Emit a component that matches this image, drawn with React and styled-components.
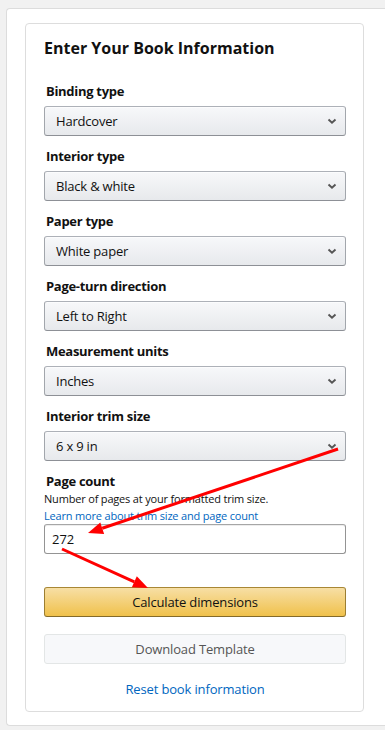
import React from "react";
import styled, { createGlobalStyle } from "styled-components";

const GlobalStyle = createGlobalStyle`
  html, body {
    margin: 0;
    padding: 0;
    background: #f1f1f1;
    overflow: hidden;
  }
  body {
    font-family: "Open Sans", "Noto Sans", sans-serif;
    color: #111;
  }
`;

const Page = styled.div`
  position: relative;
  padding: 8px 0 0 6px;
  height: 730px;
  box-sizing: border-box;
`;

// outer panel runs off the right edge of the window, so no right border
const Panel = styled.div`
  height: 718px;
  box-sizing: border-box;
  background: #fff;
  border: 1px solid #dcdcdc;
  border-right: none;
  border-radius: 4px 0 0 4px;
  padding: 14px 0 0 18px;
`;

const Card = styled.div`
  width: 339px;
  height: 689px;
  box-sizing: border-box;
  border: 1px solid #dddddd;
  border-radius: 4px;
  padding: 12px 17px 0 18px;
  display: flex;
  flex-direction: column;
`;

const Title = styled.h2`
  margin: 0 0 22px 0;
  font-size: 16px;
  line-height: 24px;
  font-weight: 700;
  color: #111;
`;

const Field = styled.div`
  margin-bottom: ${(p) => p.$gap ?? 11}px;
`;

const Label = styled.div`
  font-size: 13px;
  line-height: 18px;
  font-weight: 700;
  letter-spacing: -0.3px;
  padding-left: 2px;
  margin-bottom: ${(p) => p.$gap ?? 6}px;
`;

const Help = styled.div`
  font-size: 11px;
  line-height: 17px;
  letter-spacing: -0.18px;
  color: ${(p) => (p.$link ? "#0066c0" : "#111")};
`;

const SelectBox = styled.div`
  height: 30px;
  box-sizing: border-box;
  display: flex;
  align-items: center;
  justify-content: space-between;
  padding: 0 8px 0 11px;
  border: 1px solid;
  border-color: #adb1b8 #a2a6ac #8d9096;
  border-radius: 3px;
  background: linear-gradient(to bottom, #f7f8fa, #e7e9ec);
  box-shadow: 0 1px 0 rgba(255, 255, 255, 0.6) inset;
  font-size: 13px;
  letter-spacing: -0.2px;
  color: #111;
`;

const Chevron = () => (
  <svg width="10" height="7" viewBox="0 0 10 7">
    <path d="M1.5 1.5 L5 4.8 L8.5 1.5" fill="none" stroke="#555" strokeWidth="1.9" />
  </svg>
);

const Input = styled.div`
  height: 30px;
  box-sizing: border-box;
  display: flex;
  align-items: center;
  padding: 0 7px;
  border: 1px solid;
  border-color: #a6a6a6 #949494 #949494;
  border-radius: 3px;
  background: #fff;
  box-shadow: 0 1px 0 rgba(0, 0, 0, 0.07) inset;
  font-size: 13px;
  color: #111;
`;

const Button = styled.div`
  height: 30px;
  box-sizing: border-box;
  display: flex;
  align-items: center;
  justify-content: center;
  border: 1px solid;
  border-radius: 3px;
  font-size: 13px;
  letter-spacing: -0.15px;
  margin-top: ${(p) => p.$top}px;
  ${(p) =>
    p.$primary
      ? `
    background: linear-gradient(to bottom, #f7dfa5, #f0c14b);
    border-color: #a88734 #9c7e31 #846a29;
    color: #111;
  `
      : `
    background: #f7f8fa;
    border-color: #e3e6e6;
    color: #555;
  `}
`;

const Reset = styled.div`
  margin-top: 16px;
  text-align: center;
  font-size: 13px;
  line-height: 18px;
  letter-spacing: -0.15px;
  color: #0066c0;
`;

const Arrows = styled.svg`
  position: absolute;
  left: 0;
  top: 0;
  pointer-events: none;
`;

const selects = [
  ["Binding type", "Hardcover"],
  ["Interior type", "Black & white"],
  ["Paper type", "White paper"],
  ["Page-turn direction", "Left to Right"],
  ["Measurement units", "Inches"],
  ["Interior trim size", "6 x 9 in"],
];

function Arrow({ x1, y1, x2, y2 }) {
  const a = Math.atan2(y2 - y1, x2 - x1);
  const len = 15;
  const w = 6;
  const bx = x2 - len * Math.cos(a);
  const by = y2 - len * Math.sin(a);
  const px = -Math.sin(a) * w;
  const py = Math.cos(a) * w;
  return (
    <g>
      <line x1={x1} y1={y1} x2={bx} y2={by} stroke="#f00" strokeWidth="3" />
      <polygon
        points={`${x2},${y2} ${bx + px},${by + py} ${bx - px},${by - py}`}
        fill="#f00"
      />
    </g>
  );
}

export default function App() {
  return (
    <>
      <GlobalStyle />
      <Page>
        <Panel>
          <Card>
            <Title>Enter Your Book Information</Title>
            {selects.map(([label, value]) => (
              <Field key={label}>
                <Label>{label}</Label>
                <SelectBox>
                  <span>{value}</span>
                  <Chevron />
                </SelectBox>
              </Field>
            ))}
            <Field $gap={0}>
              <Label $gap={0}>Page count</Label>
              <Help>Number of pages at your formatted trim size.</Help>
              <Help $link>Learn more about trim size and page count</Help>
              <Input>272</Input>
            </Field>
            <Button $primary $top={33}>Calculate dimensions</Button>
            <Button $top={17}>Download Template</Button>
            <Reset>Reset book information</Reset>
          </Card>
        </Panel>
        <Arrows width="385" height="730" viewBox="0 0 385 730">
          <Arrow x1={338} y1={449} x2={88} y2={533} />
          <Arrow x1={62} y1={549} x2={148} y2={588} />
        </Arrows>
      </Page>
    </>
  );
}
